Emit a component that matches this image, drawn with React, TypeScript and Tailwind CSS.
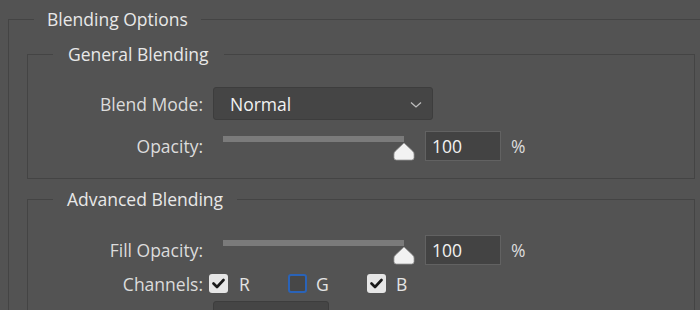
import React from "react";

function Thumb() {
  return (
    <svg width="22" height="19" viewBox="0 0 22 19" className="absolute left-[180px] top-[11px]">
      <path
        d="M11 1 L19.5 9 Q21 10.3 21 12 L21 15.5 Q21 18 18.5 18 L3.5 18 Q1 18 1 15.5 L1 12 Q1 10.3 2.5 9 Z"
        fill="#f2f2f2"
        stroke="#9a9a9a"
        strokeWidth="0.8"
      />
    </svg>
  );
}

function Slider() {
  return (
    <div className="relative ml-[10px] w-[202px] h-[30px] shrink-0">
      <div className="absolute left-[10px] top-[5px] w-[181px] h-[6px] bg-[#7b7b7b]" />
      <Thumb />
    </div>
  );
}

function NumInput({ value }: { value: string }) {
  return (
    <div className="ml-[10px] w-[76px] h-[30px] bg-[#434343] border border-[#626262] flex items-center pl-[6px] text-[#f2f2f2]">
      {value}
    </div>
  );
}

function Check({ checked, blue }: { checked: boolean; blue?: boolean }) {
  if (checked) {
    return (
      <div className="w-[19px] h-[19px] rounded-[3px] bg-[#e6e6e6] flex items-center justify-center shrink-0">
        <svg width="13" height="11" viewBox="0 0 13 11">
          <path d="M1.5 5.5 L5 9 L11.5 2" fill="none" stroke="#1a1a1a" strokeWidth="2.6" strokeLinecap="round" strokeLinejoin="round" />
        </svg>
      </div>
    );
  }
  return (
    <div className={`w-[19px] h-[19px] rounded-[3px] bg-[#474747] border-2 ${blue ? "border-[#2a63b8]" : "border-[#777]"} shrink-0`} />
  );
}

function Label({ children }: { children: React.ReactNode }) {
  return <div className="w-[175px] shrink-0 text-right text-[#dcdcdc]">{children}</div>;
}

export default function App() {
  return (
    <div className="w-[700px] h-[310px] overflow-hidden bg-[#535353] font-['Open_Sans','Noto_Sans',sans-serif] text-[17.5px] leading-[22px] text-[#e4e4e4]">
      <fieldset className="mt-[8px] ml-[8px] w-[730px] border border-[#444444] pb-[40px]">
        <legend className="ml-[25px] px-[13px] h-[22px] text-[#e8e8e8]">Blending Options</legend>

        <fieldset className="mt-[13px] ml-[18px] w-[668px] border border-[#444444] pb-[17px]">
          <legend className="ml-[25px] px-[15px] h-[22px] text-[#e8e8e8]">General Blending</legend>
          <div className="mt-[22px] flex items-center h-[33px]">
            <Label>Blend Mode:</Label>
            <div className="ml-[10px] w-[220px] h-[33px] rounded-[3px] bg-[#454545] border border-[#3d3d3d] flex items-center pl-[16px] pr-[8px] justify-between text-[#f2f2f2]">
              <span>Normal</span>
              <svg width="12" height="8" viewBox="0 0 12 8" className="mr-[2px] mt-[2px]">
                <path d="M1 1.5 L6 6 L11 1.5" fill="none" stroke="#bdbdbd" strokeWidth="1.3" />
              </svg>
            </div>
          </div>
          <div className="mt-[11px] flex items-center h-[30px]">
            <Label>Opacity:</Label>
            <Slider />
            <NumInput value="100" />
            <span className="ml-[10px] text-[#dcdcdc]">%</span>
          </div>
        </fieldset>

        <fieldset className="mt-[9px] ml-[18px] w-[668px] border border-[#444444] pb-[40px]">
          <legend className="ml-[25px] px-[14px] h-[22px] text-[#e8e8e8]">Advanced Blending</legend>
          <div className="mt-[24px] flex items-center h-[31px]">
            <Label>Fill Opacity:</Label>
            <Slider />
            <NumInput value="100" />
            <span className="ml-[10px] text-[#dcdcdc]">%</span>
          </div>
          <div className="mt-[9px] flex items-center h-[19px]">
            <Label>Channels:</Label>
            <div className="ml-[6px] flex items-center">
              <Check checked />
              <span className="ml-[11px] w-[49px]">R</span>
              <Check checked={false} blue />
              <span className="ml-[9px] w-[51px]">G</span>
              <Check checked />
              <span className="ml-[10px]">B</span>
            </div>
          </div>
          <div className="mt-[8px] ml-[185px] w-[116px] h-[30px] rounded-[3px] bg-[#454545] border border-[#3d3d3d]" />
        </fieldset>
      </fieldset>
    </div>
  );
}
